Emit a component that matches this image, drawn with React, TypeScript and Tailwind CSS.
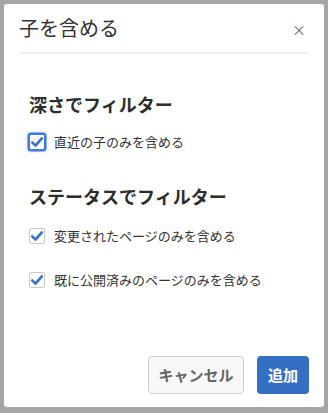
import React from "react";

const font = { fontFamily: '"Noto Sans CJK JP", "Noto Sans", sans-serif' };

function Check({ focused }: { focused?: boolean }) {
  return (
    <span
      className={
        "flex h-[16px] w-[16px] shrink-0 items-center justify-center rounded-[2px] border bg-white " +
        (focused
          ? "border-[#3f7ad6] ring-[1.5px] ring-[#3f7ad6] shadow-[0_0_3px_1px_rgba(63,122,214,0.5)]"
          : "border-[#c9c9c9]")
      }
    >
      <svg width="14" height="14" viewBox="0 0 14 14">
        <path
          d="M2.2 7.4 L5.5 10.6 L11.8 3.4"
          fill="none"
          stroke="#3a72c6"
          strokeWidth="2.7"
          strokeLinecap="round"
          strokeLinejoin="round"
        />
      </svg>
    </span>
  );
}

function Row({ label, focused }: { label: string; focused?: boolean }) {
  return (
    <div className="flex h-[24px] items-center pl-[11px]">
      <Check focused={focused} />
      <span className="ml-[9px] text-[13px] leading-[24px] text-[#333]">{label}</span>
    </div>
  );
}

export default function App() {
  return (
    <div className="h-[413px] w-[328px] bg-[#a6a6a6] p-[4px]" style={font}>
      <div className="flex h-[403px] w-[320px] flex-col rounded-[3px] bg-white px-[15px]">
        <div className="flex h-[48px] items-center justify-between">
          <span className="text-[20px] leading-[28px] text-[#333]">子を含める</span>
          <span className="pr-[3px] pt-[2px] text-[14px] leading-none text-[#6a6a8a]">×</span>
        </div>
        <div className="h-[2px] bg-[#efefef]" />
        <div className="px-[10px]">
          <div className="mt-[37px] text-[18px] font-bold leading-[26px] text-[#2d2d2d]">
            深さでフィルター
          </div>
          <div className="mt-[13px] -ml-[11px]">
            <Row label="直近の子のみを含める" focused />
          </div>
          <div className="mt-[29px] text-[18px] font-bold leading-[26px] text-[#2d2d2d]">
            ステータスでフィルター
          </div>
          <div className="mt-[15px] -ml-[11px]">
            <Row label="変更されたページのみを含める" />
          </div>
          <div className="mt-[20px] -ml-[11px]">
            <Row label="既に公開済みのページのみを含める" />
          </div>
        </div>
        <div className="mt-auto flex justify-end gap-[13px] pb-[13px]">
          <button className="h-[38px] w-[96px] rounded-[4px] border border-[#cfcfcf] bg-[#f8f8f8] text-[15px] font-bold text-[#666]">
            キャンセル
          </button>
          <button className="h-[38px] w-[52px] rounded-[4px] bg-[#356fc4] text-[15px] font-bold text-white">
            追加
          </button>
        </div>
      </div>
    </div>
  );
}
